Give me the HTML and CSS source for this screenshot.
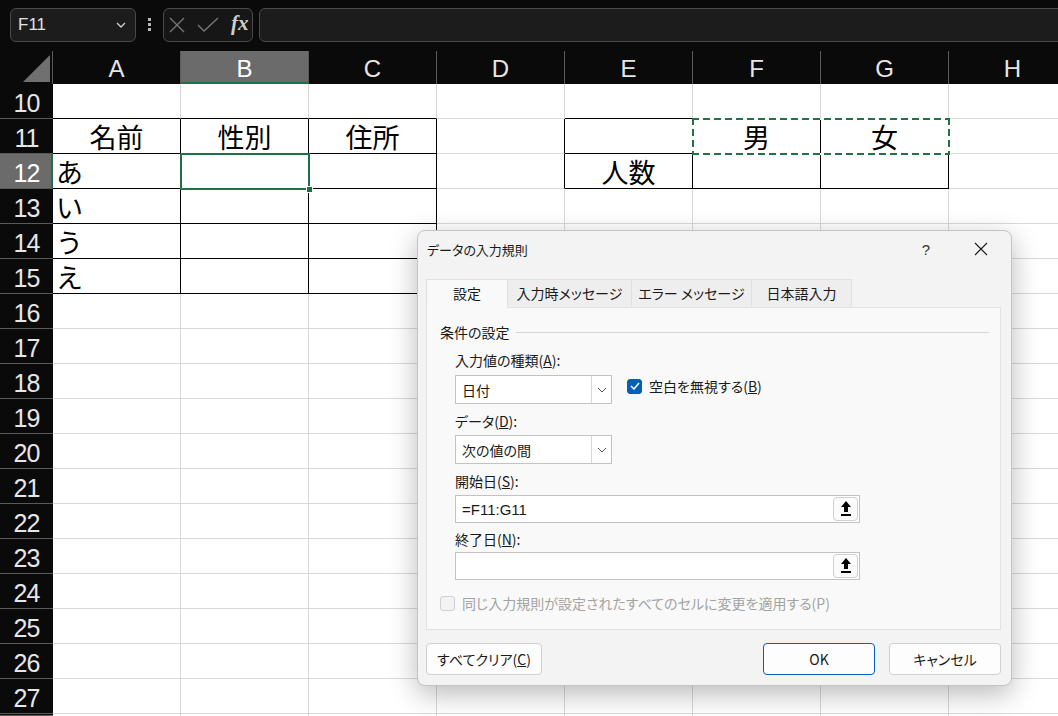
FILE: index.html
```html
<!DOCTYPE html>
<html lang="ja">
<head>
	<meta charset="UTF-8">
	<title>データの入力規則</title>
	<link rel="stylesheet" href="styles.css">
</head>
<body>
	<div class="topbar">
		<div class="namebox">
			<span>F11</span>
			<svg width="10" height="6" viewBox="0 0 10 6"><path d="M1 1l4 4 4-4" fill="none" stroke="#cfcfcf" stroke-width="1.3"/></svg>
		</div>
		<div class="dots"><i></i><i></i><i></i></div>
		<div class="fxbox">
			<svg width="16" height="16" viewBox="0 0 16 16"><path d="M1 1l14 14M15 1L1 15" stroke="#767676" stroke-width="1.4"/></svg>
			<svg width="22" height="16" viewBox="0 0 22 16"><path d="M1 8l6 6L21 1" fill="none" stroke="#767676" stroke-width="1.4"/></svg>
			<span class="fx">fx</span>
		</div>
		<div class="formula"></div>
	</div>

	<div class="sheet">
		<div class="corner"><svg width="27" height="27" viewBox="0 0 27 27"><polygon points="27,0 27,27 0,27" fill="#707070"/></svg></div>
		<div class="colhead">A</div>
		<div class="colhead active">B</div>
		<div class="colhead">C</div>
		<div class="colhead">D</div>
		<div class="colhead">E</div>
		<div class="colhead">F</div>
		<div class="colhead">G</div>
		<div class="colhead">H</div>

		<div class="rowhead">10</div>
		<div class="cell tb"></div><div class="cell tb"></div><div class="cell tb"></div><div class="cell"></div>
		<div class="cell tb"></div><div class="cell tb"></div><div class="cell tb"></div><div class="cell"></div>

		<div class="rowhead">11</div>
		<div class="cell t c">名前</div><div class="cell t c">性別</div><div class="cell t c">住所</div><div class="cell tr"></div>
		<div class="cell t"></div><div class="cell t c copy">男<span class="ants"></span></div><div class="cell t c">女</div><div class="cell"></div>

		<div class="rowhead active">12</div>
		<div class="cell t">あ</div><div class="cell t current"><span class="sel"></span><span class="handle"></span></div><div class="cell t"></div><div class="cell tr"></div>
		<div class="cell t c">人数</div><div class="cell t"></div><div class="cell t"></div><div class="cell"></div>

		<div class="rowhead">13</div>
		<div class="cell t">い</div><div class="cell t"></div><div class="cell t"></div><div class="cell"></div>
		<div class="cell"></div><div class="cell"></div><div class="cell"></div><div class="cell"></div>

		<div class="rowhead">14</div>
		<div class="cell t">う</div><div class="cell t"></div><div class="cell t"></div><div class="cell"></div>
		<div class="cell"></div><div class="cell"></div><div class="cell"></div><div class="cell"></div>

		<div class="rowhead">15</div>
		<div class="cell t">え</div><div class="cell t"></div><div class="cell t"></div><div class="cell"></div>
		<div class="cell"></div><div class="cell"></div><div class="cell"></div><div class="cell"></div>

		<div class="rowhead">16</div>
		<div class="cell"></div><div class="cell"></div><div class="cell"></div><div class="cell"></div><div class="cell"></div><div class="cell"></div><div class="cell"></div><div class="cell"></div>
		<div class="rowhead">17</div>
		<div class="cell"></div><div class="cell"></div><div class="cell"></div><div class="cell"></div><div class="cell"></div><div class="cell"></div><div class="cell"></div><div class="cell"></div>
		<div class="rowhead">18</div>
		<div class="cell"></div><div class="cell"></div><div class="cell"></div><div class="cell"></div><div class="cell"></div><div class="cell"></div><div class="cell"></div><div class="cell"></div>
		<div class="rowhead">19</div>
		<div class="cell"></div><div class="cell"></div><div class="cell"></div><div class="cell"></div><div class="cell"></div><div class="cell"></div><div class="cell"></div><div class="cell"></div>
		<div class="rowhead">20</div>
		<div class="cell"></div><div class="cell"></div><div class="cell"></div><div class="cell"></div><div class="cell"></div><div class="cell"></div><div class="cell"></div><div class="cell"></div>
		<div class="rowhead">21</div>
		<div class="cell"></div><div class="cell"></div><div class="cell"></div><div class="cell"></div><div class="cell"></div><div class="cell"></div><div class="cell"></div><div class="cell"></div>
		<div class="rowhead">22</div>
		<div class="cell"></div><div class="cell"></div><div class="cell"></div><div class="cell"></div><div class="cell"></div><div class="cell"></div><div class="cell"></div><div class="cell"></div>
		<div class="rowhead">23</div>
		<div class="cell"></div><div class="cell"></div><div class="cell"></div><div class="cell"></div><div class="cell"></div><div class="cell"></div><div class="cell"></div><div class="cell"></div>
		<div class="rowhead">24</div>
		<div class="cell"></div><div class="cell"></div><div class="cell"></div><div class="cell"></div><div class="cell"></div><div class="cell"></div><div class="cell"></div><div class="cell"></div>
		<div class="rowhead">25</div>
		<div class="cell"></div><div class="cell"></div><div class="cell"></div><div class="cell"></div><div class="cell"></div><div class="cell"></div><div class="cell"></div><div class="cell"></div>
		<div class="rowhead">26</div>
		<div class="cell"></div><div class="cell"></div><div class="cell"></div><div class="cell"></div><div class="cell"></div><div class="cell"></div><div class="cell"></div><div class="cell"></div>
		<div class="rowhead">27</div>
		<div class="cell"></div><div class="cell"></div><div class="cell"></div><div class="cell"></div><div class="cell"></div><div class="cell"></div><div class="cell"></div><div class="cell"></div>
		<div class="rowhead"></div>
		<div class="cell"></div><div class="cell"></div><div class="cell"></div><div class="cell"></div><div class="cell"></div><div class="cell"></div><div class="cell"></div><div class="cell"></div>
	</div>

	<div class="dialog">
		<div class="dlg-title">
			<span class="dlg-caption">データの入力規則</span>
			<span class="dlg-help">?</span>
			<span class="dlg-close"><svg width="14" height="14" viewBox="0 0 14 14"><path d="M1 1l12 12M13 1L1 13" stroke="#1a1a1a" stroke-width="1.1"/></svg></span>
		</div>
		<div class="dlg-body">
			<div class="tabs">
				<div class="tab active">設定</div>
				<div class="tab tab-2">入力時メッセージ</div>
				<div class="tab tab-3">エラー メッセージ</div>
				<div class="tab tab-4">日本語入力</div>
			</div>
			<div class="panel">
				<div class="group-head"><span>条件の設定</span><i class="rule"></i></div>
				<div class="group">
					<div class="label first">入力値の種類(<u>A</u>):</div>
					<div class="line">
						<div class="select"><span>日付</span><span class="drop"><svg width="10" height="6" viewBox="0 0 10 6"><path d="M1 1l4 4 4-4" fill="none" stroke="#555" stroke-width="1"/></svg></span></div>
						<div class="check">
							<span class="box on"><svg width="10" height="8" viewBox="0 0 10 8"><path d="M1 4l3 3 5-6" fill="none" stroke="#fff" stroke-width="1.5"/></svg></span>
							<span>空白を無視する(<u>B</u>)</span>
						</div>
					</div>
					<div class="label">データ(<u>D</u>):</div>
					<div class="select"><span>次の値の間</span><span class="drop"><svg width="10" height="6" viewBox="0 0 10 6"><path d="M1 1l4 4 4-4" fill="none" stroke="#555" stroke-width="1"/></svg></span></div>
					<div class="label">開始日(<u>S</u>):</div>
					<div class="ref">
						<span class="ref-text">=F11:G11</span>
						<span class="ref-btn"><svg width="12" height="18" viewBox="0 0 12 18"><path d="M6 1L1 7h3v5h4V7h3z" fill="#000"/><rect x="1" y="14" width="10" height="2" fill="#000"/></svg></span>
					</div>
					<div class="label tight">終了日(<u>N</u>):</div>
					<div class="ref">
						<span class="ref-text"></span>
						<span class="ref-btn"><svg width="12" height="18" viewBox="0 0 12 18"><path d="M6 1L1 7h3v5h4V7h3z" fill="#000"/><rect x="1" y="14" width="10" height="2" fill="#000"/></svg></span>
					</div>
				</div>
				<div class="check disabled">
					<span class="box"></span>
					<span>同じ入力規則が設定されたすべてのセルに変更を適用する(P)</span>
				</div>
			</div>
			<div class="footer">
				<button class="btn btn-clear">すべてクリア(<u>C</u>)</button>
				<span class="spacer"></span>
				<button class="btn btn-ok">OK</button>
				<button class="btn">キャンセル</button>
			</div>
		</div>
	</div>
</body>
</html>
```

FILE: styles.css
```css
* {
	margin: 0;
	box-sizing: border-box;
}

body {
	width: 1058px;
	height: 716px;
	overflow: hidden;
	position: relative;
	background-color: #0a0a0a;
	font-family: "Noto Sans CJK JP", sans-serif;
}

/* formula bar */

.topbar {
	height: 51px;
	display: flex;
	align-items: flex-start;
	padding: 8px 0 0 10px;
}

.namebox {
	width: 126px;
	height: 34px;
	border: 1px solid #4a4a4a;
	border-radius: 6px;
	background-color: #1c1c1c;
	display: flex;
	align-items: center;
	justify-content: space-between;
	padding: 0 9px 0 7px;
	color: #e2e2e2;
	font: 17px "Liberation Sans", sans-serif;
}

.dots {
	width: 27px;
	display: flex;
	flex-direction: column;
	align-items: center;
	gap: 2px;
	padding-top: 10px;
}

.dots i {
	width: 3px;
	height: 3px;
	background-color: #b5b5b5;
}

.fxbox {
	width: 90px;
	height: 34px;
	border: 1px solid #4a4a4a;
	border-radius: 6px;
	background-color: #161616;
	display: flex;
	align-items: center;
	gap: 12px;
	padding-left: 5px;
}

.fx {
	font: italic bold 21px "Liberation Serif", serif;
	color: #cfcfcf;
	margin-top: -3px;
}

.formula {
	flex: 1;
	height: 34px;
	margin-left: 6px;
	margin-right: -10px;
	border: 1px solid #4a4a4a;
	border-radius: 6px;
	background-color: #1c1c1c;
}

/* grid */

.sheet {
	display: grid;
	grid-template-columns: 53px repeat(8, 128px);
	grid-template-rows: 33px repeat(18, 35px) 2px;
	width: max-content;
}

.corner {
	background-color: #0a0a0a;
	border-right: 1px solid #5a5a5a;
	display: flex;
	align-items: flex-end;
	justify-content: flex-end;
	padding: 0 2px 2px 0;
}

.colhead {
	background-color: #0a0a0a;
	border-right: 1px solid #5a5a5a;
	color: #e6e6e6;
	font: 24px "Liberation Sans", sans-serif;
	text-align: center;
	line-height: 36px;
}

.colhead.active {
	background-color: #6b6b6b;
	border-bottom: 2px solid #1e7145;
	color: #ffffff;
}

.rowhead {
	background-color: #0a0a0a;
	border-bottom: 1px solid #5a5a5a;
	color: #e6e6e6;
	font: 25px "Liberation Sans", sans-serif;
	letter-spacing: -1px;
	text-align: center;
	line-height: 38px;
	overflow: hidden;
}

.rowhead.active {
	background-color: #6b6b6b;
	color: #ffffff;
	box-shadow: inset -2px 0 0 #1e7145;
}

.cell {
	background-color: #ffffff;
	border-right: 1px solid #d9d9d9;
	border-bottom: 1px solid #d9d9d9;
	font-size: 27px;
	line-height: 32px;
	padding: 2px 0 0 3px;
	color: #000000;
	white-space: nowrap;
}

.cell.c {
	text-align: center;
	padding-left: 0;
}

.cell.t {
	border-right-color: #000000;
	border-bottom-color: #000000;
}

.cell.tb {
	border-bottom-color: #000000;
}

.cell.tr {
	border-right-color: #000000;
}

.copy,
.current {
	position: relative;
}

.ants {
	position: absolute;
	left: -1px;
	top: -1px;
	width: 258px;
	height: 37px;
	background:
		repeating-linear-gradient(90deg, #217346 0 7px, #ffffff 7px 11px) top / 100% 2px no-repeat,
		repeating-linear-gradient(90deg, #217346 0 7px, #ffffff 7px 11px) bottom / 100% 2px no-repeat,
		repeating-linear-gradient(180deg, #217346 0 7px, #ffffff 7px 11px) left / 2px 100% no-repeat,
		repeating-linear-gradient(180deg, #217346 0 7px, #ffffff 7px 11px) right / 2px 100% no-repeat;
}

.sel {
	position: absolute;
	top: -1px;
	left: -1px;
	right: -2px;
	bottom: -2px;
	border: 2px solid #1e7145;
}

.handle {
	position: absolute;
	right: -5px;
	bottom: -5px;
	width: 7px;
	height: 7px;
	background-color: #1e7145;
	border: 1px solid #ffffff;
}

/* dialog */

.dialog {
	position: absolute;
	left: 417px;
	top: 230px;
	width: 595px;
	height: 456px;
	background-color: #f3f3f3;
	border: 1px solid #c4c4c4;
	border-radius: 8px;
	box-shadow: 0 8px 28px rgba(0, 0, 0, 0.28);
	font-size: 14px;
	font-feature-settings: "palt";
	color: #1a1a1a;
}

.dlg-title {
	height: 36px;
	display: flex;
	align-items: center;
	padding-left: 9px;
}

.dlg-caption {
	flex: 1;
	font-size: 13px;
}

.dlg-help {
	width: 40px;
	text-align: center;
	font: 15px "Liberation Sans", sans-serif;
	color: #333333;
	margin-left: 4px;
}

.dlg-close {
	width: 46px;
	margin: 0 7px 0 12px;
	display: flex;
	justify-content: center;
}

.dlg-body {
	padding: 12px 10px 0 8px;
}

.tabs {
	display: flex;
	height: 28px;
}

.tab {
	width: 82px;
	border: 1px solid #e0e0e0;
	border-bottom: 0;
	margin-right: -1px;
	background-color: #eeeeee;
	text-align: center;
	line-height: 27px;
}

.tab.active {
	background-color: #f9f9f9;
	position: relative;
	height: 29px;
	z-index: 1;
}

.tab-2 {
	width: 125px;
}

.tab-3 {
	width: 121px;
}

.tab-4 {
	width: 101px;
}

.panel {
	height: 323px;
	background-color: #f9f9f9;
	border: 1px solid #e2e2e2;
	padding: 14px 11px 0 13px;
}

.group-head {
	display: flex;
	align-items: center;
	line-height: 20px;
}

.rule {
	flex: 1;
	height: 1px;
	margin-left: 6px;
	background-color: #d6d6d6;
}

.group {
	padding-left: 15px;
}

.label {
	line-height: 20px;
	margin: 7px 0 4px;
}

.label.first {
	margin-top: 8px;
	margin-bottom: 5px;
}

.label.tight {
	margin-top: 6px;
	margin-bottom: 3px;
}

.line {
	display: flex;
	align-items: flex-start;
	gap: 15px;
}

.select {
	width: 157px;
	height: 29px;
	background-color: #ffffff;
	border: 1px solid #c2c2c2;
	display: flex;
	align-items: center;
	justify-content: space-between;
	padding-left: 6px;
}

.drop {
	width: 20px;
	height: 100%;
	border-left: 1px solid #d6d6d6;
	display: flex;
	align-items: center;
	justify-content: center;
}

.check {
	display: flex;
	align-items: center;
	gap: 7px;
	margin-top: 1px;
	line-height: 20px;
}

.box {
	width: 15px;
	height: 15px;
	border-radius: 3px;
	border: 1px solid #c4c4c4;
	background-color: #f6f6f6;
	display: flex;
	align-items: center;
	justify-content: center;
}

.box.on {
	background-color: #005fb8;
	border-color: #005fb8;
}

.ref {
	width: 405px;
	height: 28px;
	background-color: #ffffff;
	border: 1px solid #c2c2c2;
	display: flex;
	align-items: center;
	justify-content: space-between;
	padding: 0 1px 0 6px;
}

.ref-text {
	font: 15px "Liberation Sans", sans-serif;
}

.ref-btn {
	width: 25px;
	height: 24px;
	border: 1px solid #d0d0d0;
	border-radius: 4px;
	background-color: #fbfbfb;
	display: flex;
	align-items: center;
	justify-content: center;
}

.check.disabled {
	margin-top: 13px;
	color: #a3a3a3;
}

.check.disabled .box {
	background-color: #f3f3f3;
	border-color: #cfcfcf;
}

.footer {
	display: flex;
	gap: 14px;
	margin-top: 13px;
}

.spacer {
	flex: 1;
}

.btn {
	width: 112px;
	height: 32px;
	border: 1px solid #d0d0d0;
	border-radius: 4px;
	background-color: #fdfdfd;
	font: 14px "Noto Sans CJK JP", sans-serif;
	font-feature-settings: "palt";
	color: #1a1a1a;
}

.btn-clear {
	width: 116px;
}

.btn-ok {
	border-color: #005fb8;
}
```
